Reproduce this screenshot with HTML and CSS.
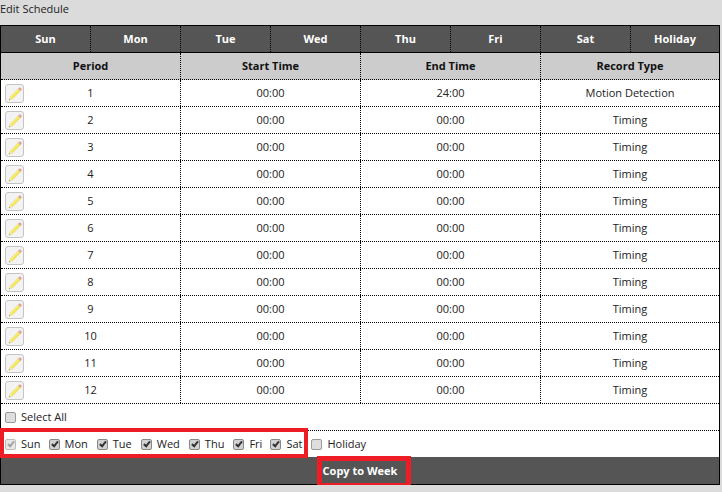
FILE: index.html
```html
<!DOCTYPE html>
<html lang="en">
<head>
<meta charset="UTF-8">
<meta name="viewport" content="width=device-width, initial-scale=1.0">
<title>Edit Schedule</title>
<link rel="stylesheet" href="styles.css">
</head>
<body>
  <svg class="sprite" width="0" height="0">
    <symbol id="pencil" viewBox="0 0 18 18">
      <path d="M4.2 12 12.4 3.8 14.4 5.8 6.2 14 3 15.2Z" fill="#f5e84e" stroke="#e2cf5c" stroke-width=".5"/>
      <path d="M5 12.2 12.8 4.4" stroke="#fbf5a8" stroke-width=".8" fill="none"/>
      <path d="M12.4 3.8 13.2 3C13.7 2.5 14.2 2.5 14.7 3L15.2 3.5C15.7 4 15.7 4.5 15.2 5L14.4 5.8Z" fill="#e8a3a0" stroke="#cf8f8c" stroke-width=".4"/>
      <path d="M4.2 12 6.2 14 3 15.2Z" fill="#f3e6c6"/>
      <path d="M3 15.2 3.5 13.9 4.3 14.7Z" fill="#777"/>
    </symbol>
  </svg>

  <div class="title">Edit Schedule</div>

  <div class="panel">
    <div class="tabs">
      <div class="tab">Sun</div>
      <div class="tab">Mon</div>
      <div class="tab">Tue</div>
      <div class="tab">Wed</div>
      <div class="tab">Thu</div>
      <div class="tab">Fri</div>
      <div class="tab">Sat</div>
      <div class="tab">Holiday</div>
    </div>

    <div class="row head">
      <div class="cell">Period</div>
      <div class="cell">Start Time</div>
      <div class="cell">End Time</div>
      <div class="cell">Record Type</div>
    </div>

    <div class="row">
      <div class="cell"><button class="edit"><svg width="18" height="18"><use href="#pencil"/></svg></button>1</div>
      <div class="cell">00:00</div>
      <div class="cell">24:00</div>
      <div class="cell">Motion Detection</div>
    </div>
    <div class="row">
      <div class="cell"><button class="edit"><svg width="18" height="18"><use href="#pencil"/></svg></button>2</div>
      <div class="cell">00:00</div>
      <div class="cell">00:00</div>
      <div class="cell">Timing</div>
    </div>
    <div class="row">
      <div class="cell"><button class="edit"><svg width="18" height="18"><use href="#pencil"/></svg></button>3</div>
      <div class="cell">00:00</div>
      <div class="cell">00:00</div>
      <div class="cell">Timing</div>
    </div>
    <div class="row">
      <div class="cell"><button class="edit"><svg width="18" height="18"><use href="#pencil"/></svg></button>4</div>
      <div class="cell">00:00</div>
      <div class="cell">00:00</div>
      <div class="cell">Timing</div>
    </div>
    <div class="row">
      <div class="cell"><button class="edit"><svg width="18" height="18"><use href="#pencil"/></svg></button>5</div>
      <div class="cell">00:00</div>
      <div class="cell">00:00</div>
      <div class="cell">Timing</div>
    </div>
    <div class="row">
      <div class="cell"><button class="edit"><svg width="18" height="18"><use href="#pencil"/></svg></button>6</div>
      <div class="cell">00:00</div>
      <div class="cell">00:00</div>
      <div class="cell">Timing</div>
    </div>
    <div class="row">
      <div class="cell"><button class="edit"><svg width="18" height="18"><use href="#pencil"/></svg></button>7</div>
      <div class="cell">00:00</div>
      <div class="cell">00:00</div>
      <div class="cell">Timing</div>
    </div>
    <div class="row">
      <div class="cell"><button class="edit"><svg width="18" height="18"><use href="#pencil"/></svg></button>8</div>
      <div class="cell">00:00</div>
      <div class="cell">00:00</div>
      <div class="cell">Timing</div>
    </div>
    <div class="row">
      <div class="cell"><button class="edit"><svg width="18" height="18"><use href="#pencil"/></svg></button>9</div>
      <div class="cell">00:00</div>
      <div class="cell">00:00</div>
      <div class="cell">Timing</div>
    </div>
    <div class="row">
      <div class="cell"><button class="edit"><svg width="18" height="18"><use href="#pencil"/></svg></button>10</div>
      <div class="cell">00:00</div>
      <div class="cell">00:00</div>
      <div class="cell">Timing</div>
    </div>
    <div class="row">
      <div class="cell"><button class="edit"><svg width="18" height="18"><use href="#pencil"/></svg></button>11</div>
      <div class="cell">00:00</div>
      <div class="cell">00:00</div>
      <div class="cell">Timing</div>
    </div>
    <div class="row">
      <div class="cell"><button class="edit"><svg width="18" height="18"><use href="#pencil"/></svg></button>12</div>
      <div class="cell">00:00</div>
      <div class="cell">00:00</div>
      <div class="cell">Timing</div>
    </div>

    <div class="checks">
      <label class="check"><span class="box"></span>Select All</label>
    </div>
    <div class="checks days">
      <label class="check"><span class="box on locked"></span>Sun</label>
      <label class="check"><span class="box on"></span>Mon</label>
      <label class="check"><span class="box on"></span>Tue</label>
      <label class="check"><span class="box on"></span>Wed</label>
      <label class="check"><span class="box on"></span>Thu</label>
      <label class="check"><span class="box on"></span>Fri</label>
      <label class="check sat"><span class="box on"></span>Sat</label>
      <label class="check"><span class="box"></span>Holiday</label>
      <span class="mark mark-days"></span>
    </div>
    <div class="footer">
      <span class="copy">Copy to Week<span class="mark mark-copy"></span></span>
    </div>
  </div>
</body>
</html>
```

FILE: styles.css
```css
body {
  margin: 0;
  background-color: #dbdbdb;
  color: #222;
  font-family: 'Open Sans', sans-serif;
  font-size: 11px;
}

.sprite {
  position: absolute;
}

.title {
  height: 25px;
  line-height: 17px;
  font-size: 11px;
}

.panel {
  width: 720px;
  box-sizing: border-box;
  border: 1px solid #000;
  background: #fff;
}

.tabs {
  display: grid;
  grid-template-columns: repeat(7, 90px) 88px;
  background: #555;
  color: #fff;
  font-weight: bold;
  border-bottom: 1px solid #000;
}

.tab {
  height: 26px;
  line-height: 26px;
  text-align: center;
  border-right: 1px dotted #000;
}

.tab:last-child {
  border-right: none;
}

.row {
  display: grid;
  grid-template-columns: 180px 180px 180px 178px;
  border-bottom: 1px dotted #000;
}

.cell {
  position: relative;
  height: 26px;
  line-height: 26px;
  text-align: center;
  border-right: 1px dotted #000;
}

.cell:last-child {
  border-right: none;
}

.head {
  background: #ccc;
  color: #111;
  font-weight: bold;
}

.edit {
  position: absolute;
  left: 4px;
  top: 4px;
  width: 19px;
  height: 19px;
  padding: 0;
  border: 1px solid #c4c4c4;
  border-radius: 3px;
  background: #f3f3f3;
}

.edit svg {
  display: block;
}

.checks {
  position: relative;
  display: flex;
  align-items: center;
  gap: 9px;
  height: 24px;
  padding: 0 0 2px 4px;
  border-bottom: 1px dotted #000;
}

.check {
  display: flex;
  align-items: center;
  gap: 5px;
}

.days .check:first-child {
  margin-right: -1px;
}

.sat {
  margin-left: -1px;
}

.box {
  position: relative;
  top: 1px;
  width: 9px;
  height: 9px;
  border: 1px solid #999;
  border-radius: 2px;
  background: #dedede;
}

.box.on {
  background: #d2d2d2;
  border-color: #888;
}

.box.on::after {
  content: "";
  position: absolute;
  left: 3px;
  top: 0;
  width: 2px;
  height: 5px;
  border: solid #333;
  border-width: 0 2px 2px 0;
  transform: rotate(40deg);
}

.box.locked {
  background: #e8e8e8;
  border-color: #bdbdbd;
}

.box.locked::after {
  border-color: #a4a4a4;
}

.days {
  border-bottom: none;
}

.footer {
  height: 27px;
  line-height: 27px;
  background: #555;
  color: #fff;
  font-weight: bold;
  text-align: center;
}

.copy {
  position: relative;
  display: inline-block;
}

.mark {
  position: absolute;
  border: solid #ee1c25;
  pointer-events: none;
}

.mark-days {
  left: -1px;
  top: -3px;
  width: 300px;
  height: 22px;
  border-width: 4px;
}

.mark-copy {
  left: -6px;
  top: -1px;
  width: 84px;
  height: 22px;
  border-width: 5px;
}
```
